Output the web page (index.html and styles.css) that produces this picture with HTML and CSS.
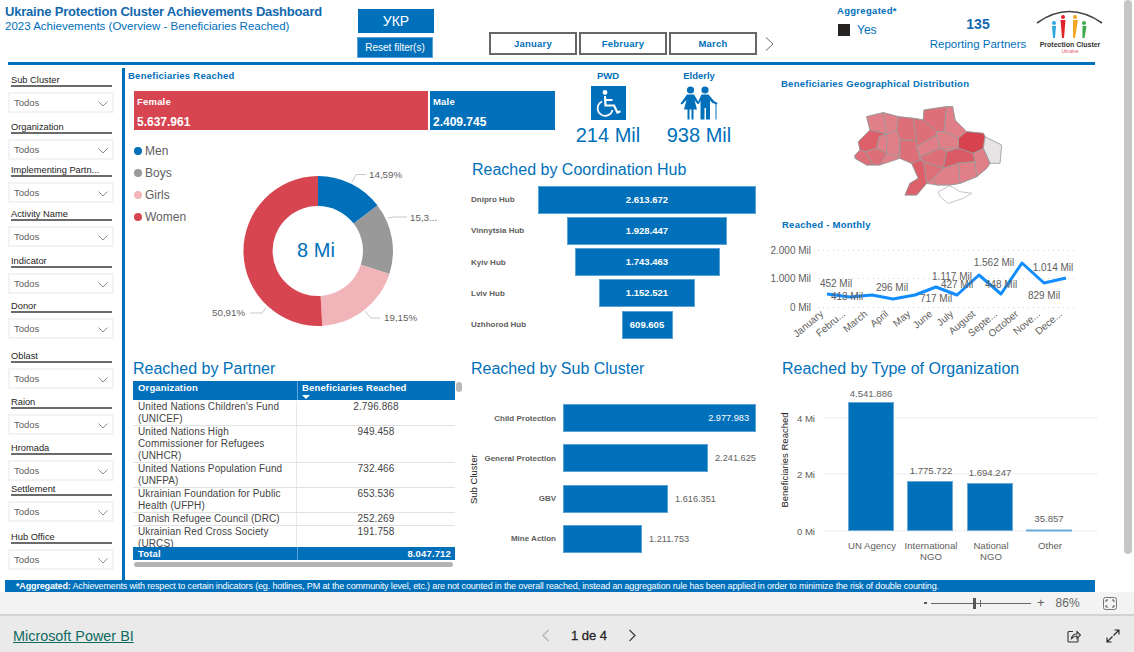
FILE: index.html
```html
<!DOCTYPE html>
<html lang="en">
<head>
<meta charset="utf-8">
<title>Ukraine Protection Cluster Achievements Dashboard</title>
<link rel="stylesheet" href="styles.css">
</head>
<body>
<div class="app">
  <div class="report">
    <div class="page-scroll"></div>
    <header class="top">
      <div class="titles">
        <h1>Ukraine Protection Cluster Achievements Dashboard</h1>
        <p>2023 Achievements (Overview - Beneficiaries Reached)</p>
      </div>
      <div class="buttons">
        <div class="btn-ukr">УКР</div>
        <div class="btn-reset">Reset filter(s)</div>
      </div>
      <div class="tabs">
        <div class="tab">January</div>
        <div class="tab">February</div>
        <div class="tab">March</div>
        <svg class="tab-next" width="9" height="14" viewBox="0 0 9 14"><path d="M1 0.500 L8 7 L1 13.500" fill="none" stroke="#666" stroke-width="1"/></svg>
      </div>
      <div class="agg">
        <div class="agg-title">Aggregated*</div>
        <div class="agg-row"><span class="agg-box"></span><span>Yes</span></div>
      </div>
      <div class="partners">
        <div class="partners-num">135</div>
        <div class="partners-label">Reporting Partners</div>
      </div>
      <svg class="logo" width="70" height="50" viewBox="0 0 70 50">
        <path d="M2 15 Q34 -8 67 15" fill="none" stroke="#444" stroke-width="1.600"/>
        <circle cx="19" cy="15" r="2" fill="#2aa8e0"/><path d="M17 18 h4 l-1 12 h-2 z" fill="#2aa8e0"/>
        <circle cx="28" cy="9" r="2" fill="#e3232a"/><path d="M25.500 12 h5 l-1.500 18 h-2 z" fill="#e3232a"/>
        <circle cx="40" cy="9" r="2" fill="#f5a623"/><path d="M38 12 h5 l-3 18 h-2 z" fill="#f5a623"/>
        <circle cx="49" cy="15" r="2" fill="#3aa84a"/><path d="M47.500 18 h4 l-2 12 h-2 z" fill="#3aa84a"/>
        <text x="35" y="38.500" class="logo-name" text-anchor="middle">Protection Cluster</text>
        <text x="35" y="45" class="logo-sub" text-anchor="middle">Ukraine</text>
      </svg>
    </header>
    <div class="rule"></div>
    <div class="body">
      <aside class="filters">
        <div class="filter"><div class="f-label">Sub Cluster</div><div class="f-drop"><span>Todos</span><svg class="chev" width="10" height="6" viewBox="0 0 10 6"><path d="M0.500 0.500 L5 5 L9.500 0.500" fill="none" stroke="#8a8a8a"/></svg></div></div>
        <div class="filter"><div class="f-label">Organization</div><div class="f-drop"><span>Todos</span><svg class="chev" width="10" height="6" viewBox="0 0 10 6"><path d="M0.500 0.500 L5 5 L9.500 0.500" fill="none" stroke="#8a8a8a"/></svg></div></div>
        <div class="filter"><div class="f-label">Implementing Partn...</div><div class="f-drop"><span>Todos</span><svg class="chev" width="10" height="6" viewBox="0 0 10 6"><path d="M0.500 0.500 L5 5 L9.500 0.500" fill="none" stroke="#8a8a8a"/></svg></div></div>
        <div class="filter"><div class="f-label">Activity Name</div><div class="f-drop"><span>Todos</span><svg class="chev" width="10" height="6" viewBox="0 0 10 6"><path d="M0.500 0.500 L5 5 L9.500 0.500" fill="none" stroke="#8a8a8a"/></svg></div></div>
        <div class="filter"><div class="f-label">Indicator</div><div class="f-drop"><span>Todos</span><svg class="chev" width="10" height="6" viewBox="0 0 10 6"><path d="M0.500 0.500 L5 5 L9.500 0.500" fill="none" stroke="#8a8a8a"/></svg></div></div>
        <div class="filter"><div class="f-label">Donor</div><div class="f-drop"><span>Todos</span><svg class="chev" width="10" height="6" viewBox="0 0 10 6"><path d="M0.500 0.500 L5 5 L9.500 0.500" fill="none" stroke="#8a8a8a"/></svg></div></div>
        <div class="filter"><div class="f-label">Oblast</div><div class="f-drop"><span>Todos</span><svg class="chev" width="10" height="6" viewBox="0 0 10 6"><path d="M0.500 0.500 L5 5 L9.500 0.500" fill="none" stroke="#8a8a8a"/></svg></div></div>
        <div class="filter"><div class="f-label">Raion</div><div class="f-drop"><span>Todos</span><svg class="chev" width="10" height="6" viewBox="0 0 10 6"><path d="M0.500 0.500 L5 5 L9.500 0.500" fill="none" stroke="#8a8a8a"/></svg></div></div>
        <div class="filter"><div class="f-label">Hromada</div><div class="f-drop"><span>Todos</span><svg class="chev" width="10" height="6" viewBox="0 0 10 6"><path d="M0.500 0.500 L5 5 L9.500 0.500" fill="none" stroke="#8a8a8a"/></svg></div></div>
        <div class="filter"><div class="f-label">Settlement</div><div class="f-drop"><span>Todos</span><svg class="chev" width="10" height="6" viewBox="0 0 10 6"><path d="M0.500 0.500 L5 5 L9.500 0.500" fill="none" stroke="#8a8a8a"/></svg></div></div>
        <div class="filter"><div class="f-label">Hub Office</div><div class="f-drop"><span>Todos</span><svg class="chev" width="10" height="6" viewBox="0 0 10 6"><path d="M0.500 0.500 L5 5 L9.500 0.500" fill="none" stroke="#8a8a8a"/></svg></div></div>
      </aside>
      <div class="vline"></div>
      <main class="main">
        <section class="upper">
          <div class="upper-left">
            <div class="band">
              <div class="kpi">
                <div class="small-title">Beneficiaries Reached</div>
                <div class="kpi-bars">
                  <div class="kpi-female"><b>Female</b><strong>5.637.961</strong></div>
                  <div class="kpi-male"><b>Male</b><strong>2.409.745</strong></div>
                </div>
              </div>
              <div class="stat">
                <div class="stat-label">PWD</div>
                <svg class="stat-icon" width="35" height="34" viewBox="0 0 35 34">
                  <rect width="35" height="34" fill="#0070bb"/>
                  <circle cx="14" cy="6.500" r="2.400" fill="#fff"/>
                  <path d="M14 10 L14.500 19.500 H23 L26.500 26.500 L29.500 25.300" fill="none" stroke="#fff" stroke-width="2.200"/>
                  <path d="M14.200 14 H21.500" fill="none" stroke="#fff" stroke-width="2"/>
                  <path d="M11 15.500 A7.500 7.500 0 1 0 21.500 24" fill="none" stroke="#fff" stroke-width="1.800"/>
                </svg>
                <div class="stat-value">214 Mil</div>
              </div>
              <div class="stat">
                <div class="stat-label">Elderly</div>
                <svg class="stat-icon" width="38" height="34" viewBox="0 0 38 34">
                  <circle cx="10.500" cy="4" r="3.600" fill="#0070bb"/>
                  <path d="M7 8.500 H14 L19 17 L17.500 18 L14.500 14 L17 23.500 H13.500 V33.500 H11.500 V23.500 H9.500 V33.500 H7.500 V23.500 H4 L6.500 14 L2 18.500 L0.500 17.500 Z" fill="#0070bb"/>
                  <circle cx="25" cy="4" r="3.600" fill="#0070bb"/>
                  <path d="M21.500 8.500 H28.500 L34 15 L37.500 17 L37 18.500 L32.500 17 L30 14.500 V33.500 H26 V22 H24.500 V33.500 H20.500 V14.500 L18.800 18 L17.500 17 Z" fill="#0070bb"/>
                  <path d="M36 17.500 V33.500" stroke="#0070bb" stroke-width="1"/>
                </svg>
                <div class="stat-value">938 Mil</div>
              </div>
            </div>
            <div class="mid">
              <div class="donut-panel">
                <ul class="legend">
                  <li><i class="dot d-men"></i>Men</li>
                  <li><i class="dot d-boys"></i>Boys</li>
                  <li><i class="dot d-girls"></i>Girls</li>
                  <li><i class="dot d-women"></i>Women</li>
                </ul>
                <svg class="donut" width="261" height="211" viewBox="204 144 261 211">
                  <path fill="#0070bb" d="M318 176 A75 75 0 0 1 377.500 205.400 L353.700 223.600 A45 45 0 0 0 318 206 Z"/>
                  <path fill="#999999" d="M377.500 205.400 A75 75 0 0 1 389.400 273.900 L360.800 264.700 A45 45 0 0 0 353.700 223.600 Z"/>
                  <path fill="#f0b4b9" d="M389.400 273.900 A75 75 0 0 1 322.300 325.900 L320.600 295.900 A45 45 0 0 0 360.800 264.700 Z"/>
                  <path fill="#d64550" d="M322.300 325.900 A75 75 0 1 1 318 176 L318 206 A45 45 0 1 0 320.600 295.900 Z"/>
                  <g fill="none" stroke="#c8c8c8">
                    <path d="M352 182 L356 174.500 H366"/>
                    <path d="M388 218 L393 217 H407"/>
                    <path d="M365 311 L371 318 H380"/>
                    <path d="M266 308 L262 313 H250"/>
                  </g>
                  <text class="d-label" x="369" y="178">14,59%</text>
                  <text class="d-label" x="410" y="221">15,3...</text>
                  <text class="d-label" x="384" y="321">19,15%</text>
                  <text class="d-label" x="212" y="316">50,91%</text>
                  <text class="d-center" x="316" y="257" text-anchor="middle">8 Mi</text>
                </svg>
              </div>
              <div class="funnel-panel">
                <h2 class="big-title funnel-title">Reached by Coordination Hub</h2>
                <div class="funnel">
                  <div class="f-row"><span class="f-name">Dnipro Hub</span><div class="f-track"><div class="f-bar" style="width:218px">2.613.672</div></div></div>
                  <div class="f-row"><span class="f-name">Vinnytsia Hub</span><div class="f-track"><div class="f-bar" style="width:160px">1.928.447</div></div></div>
                  <div class="f-row"><span class="f-name">Kyiv Hub</span><div class="f-track"><div class="f-bar" style="width:145px">1.743.463</div></div></div>
                  <div class="f-row"><span class="f-name">Lviv Hub</span><div class="f-track"><div class="f-bar" style="width:96px">1.152.521</div></div></div>
                  <div class="f-row"><span class="f-name">Uzhhorod Hub</span><div class="f-track"><div class="f-bar" style="width:51px">609.605</div></div></div>
                </div>
              </div>
            </div>
          </div>
          <div class="upper-right">
            <div class="small-title geo-title">Beneficiaries Geographical Distribution</div>
            <svg class="map" width="155" height="110" viewBox="240 90 465 330">
              <g stroke="#9a9a9a" stroke-width="2.500" stroke-linejoin="round">
                <polygon class="m-b" points="255,255 270,240 265,215 290,190 300,180 290,140 340,128 385,140 430,145 460,150 462,120 530,110 548,110 555,150 590,185 640,190 645,200 640,235 660,280 650,295 620,320 570,340 540,345 500,345 470,340 440,375 405,375 420,340 445,325 425,280 390,265 330,285 290,285 255,265"/>
                <polygon class="m-b" points="290,140 340,128 350,192 300,180"/>
                <polygon class="m-b" points="340,128 385,140 380,180 350,192"/>
                <polygon class="m-c" points="385,140 430,145 440,212 390,210 380,180"/>
                <polygon class="m-c" points="430,145 460,150 500,185 500,195 440,230 440,212"/>
                <polygon class="m-c" points="460,150 462,120 530,110 522,185 500,185"/>
                <polygon class="m-b" points="530,110 548,110 555,150 590,185 565,205 522,185"/>
                <polygon class="m-x" points="590,185 640,190 645,200 640,235 610,250 565,235 565,205"/>
                <polygon class="m-g" points="645,200 695,225 690,280 660,280 640,235"/>
                <polygon class="m-d" points="300,180 350,192 328,200 320,235 285,245 270,240 265,215"/>
                <polygon class="m-c" points="255,255 270,240 285,245 310,285 290,285 255,265"/>
                <polygon class="m-b" points="328,200 350,192 355,195 350,250 320,235"/>
                <polygon class="m-b" points="350,192 380,180 390,210 385,260 350,250"/>
                <polygon class="m-c" points="285,245 320,235 350,250 330,285 310,285"/>
                <polygon class="m-c" points="390,210 440,212 440,230 450,270 425,280 390,265"/>
                <polygon class="m-b" points="440,230 500,195 510,235 450,260"/>
                <polygon class="m-b" points="500,185 522,185 565,205 565,235 510,235 500,195"/>
                <polygon class="m-c" points="450,260 510,235 530,245 520,295 460,275"/>
                <polygon class="m-e" points="530,245 565,235 610,250 615,275 565,280 520,295"/>
                <polygon class="m-b" points="610,250 640,235 660,280 650,295 620,320 615,275"/>
                <polygon class="m-b" points="565,280 615,275 620,320 570,340"/>
                <polygon class="m-c" points="460,275 520,295 490,325 470,340"/>
                <polygon class="m-b" points="490,325 520,295 565,280 570,340 540,345 500,345"/>
                <polygon class="m-d" points="425,280 450,270 460,275 470,340 440,375 405,375 420,340 445,325"/>
                <polygon class="m-w" points="505,365 540,347 570,365 605,370 580,385 535,400 510,380"/>
              </g>
            </svg>
            <div class="small-title month-title">Reached - Monthly</div>
            <svg class="line-chart" width="330" height="119" viewBox="765 236 330 119">
              <g stroke="#d4d4d4" stroke-dasharray="1 4">
                <line x1="818" x2="1075" y1="250.500" y2="250.500"/>
                <line x1="818" x2="1075" y1="278.500" y2="278.500"/>
                <line x1="818" x2="1075" y1="307.500" y2="307.500"/>
              </g>
              <g class="axis" text-anchor="end">
                <text x="811" y="254">2.000 Mil</text>
                <text x="811" y="282">1.000 Mil</text>
                <text x="811" y="311">0 Mil</text>
              </g>
              <polyline points="827,294 850,297 872,295 893,299 915,295 936,287 957,295 979,275 1001,294 1022,263 1044,283 1066,278" fill="none" stroke="#118dff" stroke-width="3" stroke-linejoin="round"/>
              <g class="axis" text-anchor="middle">
                <text x="836" y="287">452 Mil</text>
                <text x="847" y="300">413 Mil</text>
                <text x="892" y="291">296 Mil</text>
                <text x="936" y="302">717 Mil</text>
                <text x="952" y="280">1.117 Mil</text>
                <text x="957" y="288">427 Mil</text>
                <text x="1001" y="288">448 Mil</text>
                <text x="994" y="266">1.562 Mil</text>
                <text x="1044" y="299">829 Mil</text>
                <text x="1053" y="271">1.014 Mil</text>
              </g>
              <g class="axis" text-anchor="end">
                <text transform="translate(824 315) rotate(-40)">January</text>
                <text transform="translate(846 315) rotate(-40)">Febru...</text>
                <text transform="translate(868 315) rotate(-40)">March</text>
                <text transform="translate(889 315) rotate(-40)">April</text>
                <text transform="translate(911 315) rotate(-40)">May</text>
                <text transform="translate(933 315) rotate(-40)">June</text>
                <text transform="translate(954 315) rotate(-40)">July</text>
                <text transform="translate(976 315) rotate(-40)">August</text>
                <text transform="translate(998 315) rotate(-40)">Septe...</text>
                <text transform="translate(1019 315) rotate(-40)">October</text>
                <text transform="translate(1041 315) rotate(-40)">Nove...</text>
                <text transform="translate(1063 315) rotate(-40)">Dece...</text>
              </g>
            </svg>
          </div>
        </section>
        <section class="lower">
          <div class="partner-panel">
            <h2 class="big-title">Reached by Partner</h2>
            <div class="table-wrap">
              <div class="tbl">
                <div class="t-head">
                  <div class="t-hcell">Organization</div>
                  <div class="t-hcell">Beneficiaries Reached<svg class="sort" width="8" height="4" viewBox="0 0 8 4"><path d="M0 0 H8 L4 4 Z" fill="#fff"/></svg></div>
                </div>
                <div class="t-body">
                  <div class="t-row r2"><div class="t-org">United Nations Children's Fund (UNICEF)</div><div class="t-val">2.796.868</div></div>
                  <div class="t-row r3"><div class="t-org">United Nations High Commissioner for Refugees (UNHCR)</div><div class="t-val">949.458</div></div>
                  <div class="t-row r2"><div class="t-org">United Nations Population Fund (UNFPA)</div><div class="t-val">732.466</div></div>
                  <div class="t-row r2"><div class="t-org">Ukrainian Foundation for Public Health (UFPH)</div><div class="t-val">653.536</div></div>
                  <div class="t-row r1"><div class="t-org">Danish Refugee Council (DRC)</div><div class="t-val">252.269</div></div>
                  <div class="t-row r2"><div class="t-org">Ukrainian Red Cross Society (URCS)</div><div class="t-val">191.758</div></div>
                </div>
                <div class="t-total"><div>Total</div><div class="t-total-val">8.047.712</div></div>
              </div>
              <div class="v-thumb"></div>
            </div>
            <div class="h-thumb"></div>
          </div>
          <div class="sub-panel">
            <h2 class="big-title">Reached by Sub Cluster</h2>
            <div class="sub-chart">
              <div class="axis-v">Sub Cluster</div>
              <div class="sub-rows">
                <div class="s-row"><span class="s-name">Child Protection</span><div class="s-bar s-inside" style="width:193px">2.977.983</div></div>
                <div class="s-row"><span class="s-name">General Protection</span><div class="s-bar" style="width:145px"></div><span class="s-val">2.241.625</span></div>
                <div class="s-row"><span class="s-name">GBV</span><div class="s-bar" style="width:105px"></div><span class="s-val">1.616.351</span></div>
                <div class="s-row"><span class="s-name">Mine Action</span><div class="s-bar" style="width:79px"></div><span class="s-val">1.211.753</span></div>
              </div>
            </div>
          </div>
          <div class="org-panel">
            <h2 class="big-title">Reached by Type of Organization</h2>
            <svg class="org-chart" width="349" height="193" viewBox="775 382 349 193">
              <g stroke="#f3f3f3" stroke-width="1.500">
                <line x1="824" x2="1098" y1="418" y2="418"/>
                <line x1="824" x2="1098" y1="474" y2="474"/>
                <line x1="824" x2="1098" y1="531" y2="531"/>
              </g>
              <g class="axis" text-anchor="end">
                <text x="815" y="422">4 Mi</text>
                <text x="815" y="478">2 Mi</text>
                <text x="815" y="535">0 Mi</text>
              </g>
              <text class="axis-title" transform="translate(788 460) rotate(-90)" text-anchor="middle">Beneficiaries Reached</text>
              <g fill="#0070bb" stroke="#6aa9d8" stroke-width="1">
                <rect x="848.500" y="402.500" width="45" height="128"/>
                <rect x="907.500" y="481.500" width="45" height="49"/>
                <rect x="967.500" y="483.500" width="45" height="47"/>
                <rect x="1026.500" y="530" width="45" height="1"/>
              </g>
              <g class="axis" text-anchor="middle">
                <text x="871" y="397">4.541.886</text>
                <text x="931" y="474">1.775.722</text>
                <text x="990" y="476">1.694.247</text>
                <text x="1049" y="522">35.857</text>
                <text x="872" y="549">UN Agency</text>
                <text x="931" y="549">International</text>
                <text x="931" y="560">NGO</text>
                <text x="991" y="549">National</text>
                <text x="991" y="560">NGO</text>
                <text x="1050" y="549">Other</text>
              </g>
            </svg>
          </div>
        </section>
      </main>
    </div>
    <div class="note"><b>*Aggregated:</b> Achievements with respect to certain indicators (eg. hotlines, PM at the community level, etc.) are not counted in the overall reached, instead an aggregation rule has been applied in order to minimize the risk of double counting.</div>
  </div>
  <div class="zoombar">
    <span class="z-minus"></span>
    <div class="z-track"><span class="z-tick"></span><span class="z-thumb"></span></div>
    <span class="z-plus">+</span>
    <span class="z-pct">86%</span>
    <svg class="z-fit" width="14" height="13" viewBox="0 0 14 13"><rect x="0.500" y="0.500" width="13" height="12" rx="2" fill="none" stroke="#777"/><path d="M3 5 V3 H5 M9 3 H11 V5 M11 8 V10 H9 M5 10 H3 V8" fill="none" stroke="#555"/></svg>
  </div>
  <footer class="footer">
    <a class="pbi" href="#">Microsoft Power BI</a>
    <div class="pager">
      <svg width="9" height="13" viewBox="0 0 9 13"><path d="M7.500 1 L2 6.500 L7.500 12" fill="none" stroke="#b4b4b4" stroke-width="1.300"/></svg>
      <span class="pager-text">1 de 4</span>
      <svg width="9" height="13" viewBox="0 0 9 13"><path d="M1.500 1 L7 6.500 L1.500 12" fill="none" stroke="#444" stroke-width="1.300"/></svg>
    </div>
    <div class="foot-icons">
      <svg width="14" height="14" viewBox="0 0 14 14"><path d="M6 2.500 H2 A1 1 0 0 0 1 3.500 V12 A1 1 0 0 0 2 13 H10 A1 1 0 0 0 11 12 V9" fill="none" stroke="#333" stroke-width="1.100"/><path d="M4.500 9.500 C5 6.500 7 5 10 5 V2.500 L13.500 6 L10 9.500 V7 C7.500 7 6 8 4.500 9.500 Z" fill="none" stroke="#333" stroke-width="1.100"/></svg>
      <svg width="14" height="14" viewBox="0 0 14 14"><path d="M8.500 1 H13 V5.500 M13 1 L7.500 6.500 M5.500 13 H1 V8.500 M1 13 L6.500 7.500" fill="none" stroke="#222" stroke-width="1.100"/></svg>
    </div>
  </footer>
</div>
</body>
</html>
```

FILE: styles.css
```css
* { box-sizing: border-box; }
html, body { margin: 0; padding: 0; }
body { width: 1134px; height: 652px; overflow: hidden; font-family: "Liberation Sans", Arial, sans-serif; background: #fff; color: #605e5c; }
h1, h2, p, ul { margin: 0; padding: 0; }
.app { display: flex; flex-direction: column; height: 652px; }
.report { position: relative; height: 592px; background: #fff; flex: none; }
.page-scroll { position: absolute; top: 0; left: 1124px; width: 8px; height: 554px; background: #c6c6c6; border-radius: 4px; }

/* header */
.top { display: flex; height: 62px; }
.titles { width: 358px; padding: 4px 0 0 5px; color: #0070bb; }
.titles h1 { font-size: 13px; line-height: 15px; font-weight: 700; color: #1268ad; white-space: nowrap; letter-spacing: -0.200px; }
.titles p { font-size: 11.500px; line-height: 15px; white-space: nowrap; }
.buttons { width: 131px; padding-top: 9px; display: flex; flex-direction: column; }
.btn-ukr { width: 76px; height: 24px; background: #0070bb; color: #fff; font-size: 14px; line-height: 24px; text-align: center; }
.btn-reset { width: 76px; height: 21px; margin-top: 4px; margin-left: -1px; background: #0070bb; color: #fff; font-size: 10px; font-weight: 400; line-height: 19px; text-align: center; border: 1px solid #5ba3d6; }
.tabs { width: 348px; display: flex; gap: 2px; padding-top: 32px; align-items: flex-start; }
.tab { width: 88px; height: 23px; border: 2px solid #666; color: #0070bb; font-size: 9.500px; font-weight: 700; line-height: 19px; text-align: center; background: #fff; letter-spacing: 0.200px; }
.tab-next { margin: 5px 0 0 6px; }
.agg { width: 89px; color: #0070bb; padding-top: 5px; }
.agg-title { font-size: 9.500px; font-weight: 700; line-height: 12px; letter-spacing: 0.300px; }
.agg-row { display: flex; align-items: center; gap: 7px; font-size: 12px; margin-top: 6px; padding-left: 1px; }
.agg-box { width: 12px; height: 12px; background: #252423; }
.partners { width: 106px; color: #0070bb; text-align: center; padding-top: 16px; margin-left: -1px; }
.partners-num { font-size: 14px; font-weight: 700; line-height: 17px; color: #1268ad; }
.partners-label { font-size: 11.500px; line-height: 14px; margin-top: 4px; white-space: nowrap; }
.logo { margin-left: 4px; margin-top: 8px; }
.logo-name { font-size: 7px; font-weight: 700; fill: #333; }
.logo-sub { font-size: 5px; fill: #e0606a; }
.rule { height: 3px; margin: 0 39px 0 8px; background: #0070bb; }

/* body */
.body { display: flex; height: 512px; margin-top: 3px; }
.filters { width: 122px; flex: none; padding-top: 5px; display: grid; grid-template-rows: 47px 43px 44px 47px 45px 50px 46px 46px 41px 48px 27px; }
.f-label { margin-left: 11px; width: 101px; height: 14px; border-bottom: 2px solid #6b6b6b; font-size: 9.300px; line-height: 15px; color: #252423; white-space: nowrap; }
.f-drop { margin: 5px 0 0 8px; width: 106px; height: 21px; border: 2px solid #f3f3f3; display: flex; align-items: center; justify-content: space-between; padding: 0 4px 0 4px; font-size: 9.500px; color: #605e5c; }
.chev { margin-top: 3px; }
.vline { width: 3px; height: 512px; flex: none; background: #0070bb; }
.main { width: 999px; flex: none; margin-left: 2px; display: flex; flex-direction: column; }
.upper { display: flex; height: 287px; }
.upper-left { width: 648px; flex: none; }
.upper-right { width: 320px; flex: none; }
.small-title { font-size: 9.500px; font-weight: 700; line-height: 14px; color: #0070bb; letter-spacing: 0.250px; white-space: nowrap; }
.band { display: flex; height: 76px; }
.kpi { width: 428px; padding: 1px 0 0 1px; }
.kpi-bars { display: flex; gap: 2px; margin: 8px 0 0 6px; width: 421px; height: 39px; color: #fff; }
.kpi-female, .kpi-male { display: flex; flex-direction: column; padding-left: 3px; }
.kpi-female { width: 294px; background: #d64550; }
.kpi-male { width: 125px; background: #0070bb; }
.kpi-bars b { font-size: 9.500px; line-height: 12px; margin-top: 5px; letter-spacing: 0.200px; }
.kpi-bars strong { font-size: 12px; line-height: 14px; margin-top: 7px; }
.stat { width: 70px; padding-top: 1px; display: flex; flex-direction: column; align-items: center; color: #0070bb; }
.stat + .stat { margin-left: 21px; }
.kpi + .stat { margin-left: 18px; }
.stat-label { font-size: 9.500px; font-weight: 700; line-height: 14px; }
.stat-icon { margin-top: 3px; flex: none; }
.stat-value { font-size: 20px; line-height: 18px; margin-top: 6px; white-space: nowrap; }
.mid { display: flex; height: 211px; }
.donut-panel { width: 338px; flex: none; display: flex; }
.legend { list-style: none; width: 77px; flex: none; padding-left: 7px; font-size: 12px; color: #605e5c; }
.legend li { display: flex; align-items: center; height: 14px; margin-bottom: 8px; gap: 3px; }
.dot { width: 8px; height: 8px; border-radius: 50%; display: block; }
.d-men { background: #0070bb; } .d-boys { background: #999; } .d-girls { background: #f0b4b9; } .d-women { background: #d64550; }
.d-label { font-size: 9.800px; fill: #605e5c; }
.d-center { font-size: 20px; fill: #0070bb; }
.funnel-panel { width: 310px; flex: none; padding: 16px 0 0 6px; }
.big-title { font-size: 16px; line-height: 20px; font-weight: 400; color: #0070bb; white-space: nowrap; }
.funnel-title { margin-left: 1px; }
.funnel { display: flex; flex-direction: column; gap: 2.250px; margin-top: 5px; }
.f-row { display: flex; height: 29px; align-items: center; }
.f-name { width: 67px; flex: none; font-size: 8px; font-weight: 700; color: #605e5c; white-space: nowrap; }
.f-track { width: 218px; display: flex; justify-content: center; }
.f-bar { height: 28px; background: #0070bb; color: #fff; font-size: 9.500px; font-weight: 700; line-height: 26px; text-align: center; border: 1px solid #5ba3d6; white-space: nowrap; }
.geo-title { padding: 9px 0 0 6px; }
.map { display: block; margin: 9px 0 0 75px; }
.m-b { fill: #e07f87; } .m-c { fill: #dd6f78; } .m-d { fill: #dc5f6a; } .m-e { fill: #da5a65; } .m-x { fill: #d6434f; } .m-g { fill: #e6e4e4; } .m-w { fill: #fff; stroke: #bbb; }
.month-title { margin: 8px 0 0 7px; height: 14px; }
.line-chart { display: block; margin: 4px 0 0 -10px; }
.axis text { font-size: 10px; fill: #605e5c; }
.axis-title { font-size: 9.500px; fill: #252423; }
.org-chart .axis text { font-size: 9.600px; }

/* lower */
.lower { display: grid; grid-template-columns: 338px 310px 351px; height: 225px; }
.partner-panel { padding: 4px 0 0 6px; }
.table-wrap { display: flex; margin-top: 2px; height: 179px; }
.tbl { width: 322px; flex: none; }
.t-head { display: grid; grid-template-columns: 164px 158px; height: 19px; background: #0070bb; color: #fff; font-size: 9.500px; font-weight: 700; line-height: 13px; letter-spacing: 0.150px; }
.t-hcell { padding-left: 5px; }
.t-hcell + .t-hcell { border-left: 1px solid #5ba3d6; padding-left: 4px; }
.sort { display: block; margin-top: 1px; }
.t-body { height: 147px; overflow: hidden; padding-top: 1px; font-size: 10px; line-height: 12px; color: #444; letter-spacing: 0.100px; }
.t-row { display: grid; grid-template-columns: 164px 158px; border-bottom: 1px solid #e2e2e2; }
.r1 { height: 13px; } .r2 { height: 25px; } .r3 { height: 37px; }
.t-org { padding-left: 5px; padding-right: 10px; border-right: 1px solid #e8e8e8; }
.t-val { text-align: center; }
.t-total { display: grid; grid-template-columns: 164px 158px; height: 13px; background: #0070bb; color: #fff; font-size: 9.500px; font-weight: 700; line-height: 13px; padding-left: 5px; letter-spacing: 0.150px; }
.t-total-val { text-align: right; padding-right: 9px; margin-left: -5px; border-left: 1px solid #5ba3d6; }
.v-thumb { width: 6px; height: 10px; margin: 1px 0 0 1px; background: #b8b8b8; border-radius: 3px; }
.h-thumb { width: 319px; height: 5px; margin: 2px 0 0 1px; background: #b4b4b4; border-radius: 3px; }
.sub-panel { padding: 4px 0 0 6px; }
.sub-chart { display: flex; margin-top: 25px; }
.axis-v { writing-mode: vertical-rl; transform: rotate(180deg); width: 12px; height: 150px; margin-left: -3px; text-align: center; font-size: 9.500px; color: #252423; }
.sub-rows { display: flex; flex-direction: column; gap: 12.300px; }
.s-row { display: flex; align-items: center; height: 28px; }
.s-name { width: 76px; flex: none; text-align: right; margin-right: 7px; font-size: 8px; font-weight: 700; color: #605e5c; white-space: nowrap; }
.s-bar { height: 28px; background: #0070bb; border: 1px solid #5ba3d6; }
.s-inside { color: #fff; font-size: 9.200px; text-align: right; line-height: 26px; padding-right: 6px; }
.s-val { margin-left: 7px; font-size: 9.200px; color: #605e5c; }
.org-panel { padding: 4px 0 0 7px; }
.org-chart { display: block; margin: 3px 0 0 -7px; }

.note { margin-left: 5px; width: 1090px; height: 12px; background: #0070bb; color: #fff; font-size: 9px; line-height: 13px; padding-left: 11px; white-space: nowrap; overflow: hidden; letter-spacing: -0.155px; }

/* bottom bars */
.zoombar { height: 24px; flex: none; background: #f3f3f3; border-bottom: 2px solid #d2d2d2; display: flex; align-items: center; color: #605e5c; padding-left: 924px; }
.z-minus { width: 3px; height: 2px; background: #555; }
.z-track { position: relative; width: 100px; height: 1px; background: #666; margin-left: 4px; }
.z-tick { position: absolute; left: 49px; top: -3px; width: 1px; height: 7px; background: #666; }
.z-thumb { position: absolute; left: 42px; top: -5px; width: 3px; height: 11px; background: #555; }
.z-plus { font-size: 13px; line-height: 14px; margin-left: 6px; }
.z-pct { font-size: 12px; margin-left: 11px; color: #666; }
.z-fit { margin-left: 23px; }
.footer { flex: 1; background: #eaeaea; display: grid; grid-template-columns: 528px 96px 1fr; align-items: center; padding: 3px 0 0 13px; }
.pbi { font-size: 14.400px; color: #0f6b5f; text-decoration: underline; }
.pager { display: flex; align-items: center; justify-content: space-between; width: 96px; color: #252423; }
.pager-text { font-size: 13px; font-weight: 400; -webkit-text-stroke: 0.300px #252423; }
.foot-icons { display: flex; justify-content: flex-end; gap: 25px; padding-right: 14px; }
```
